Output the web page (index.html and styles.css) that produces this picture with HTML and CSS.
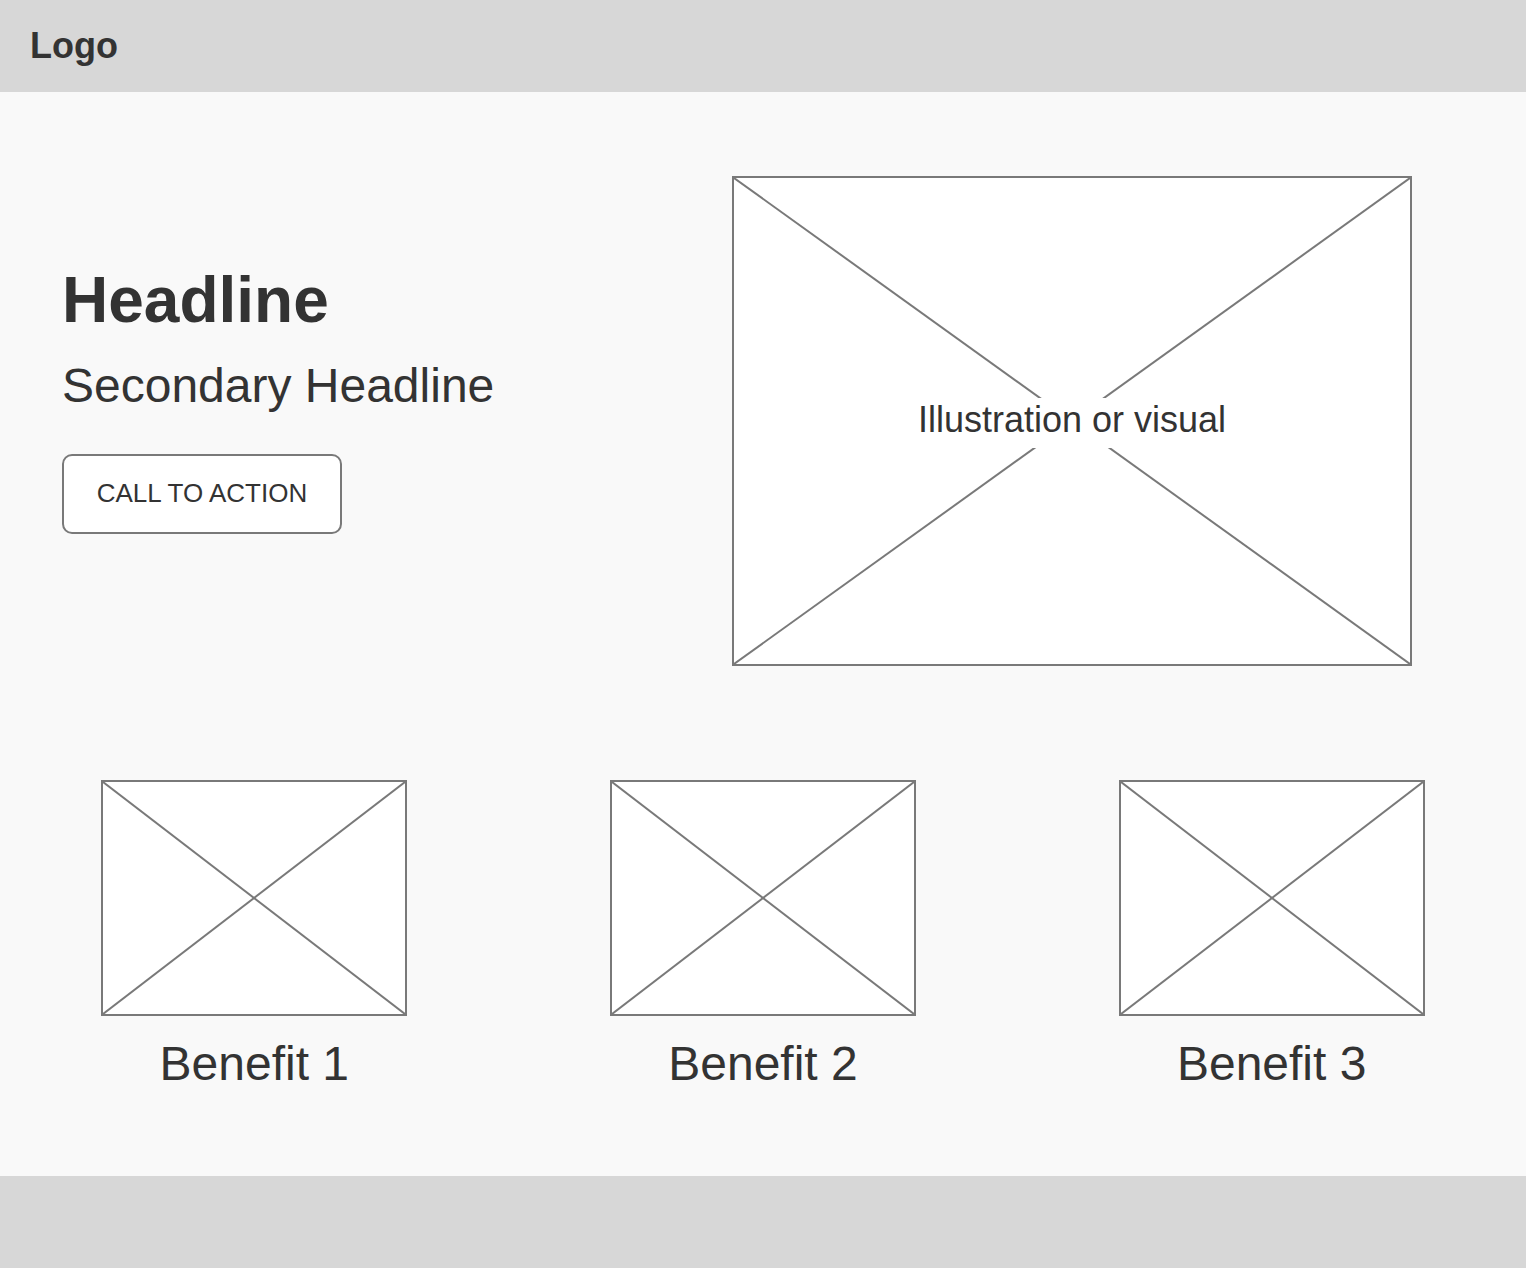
FILE: index.html
```html
<!DOCTYPE html>
<html lang="en">
<head>
  <meta charset="utf-8">
  <meta name="viewport" content="width=device-width, initial-scale=1">
  <title>Landing page</title>
  <link rel="stylesheet" href="styles.css">
</head>
<body>
  <header class="site-header">
    <div class="logo">Logo</div>
  </header>

  <main class="content">
    <section class="hero">
      <div class="hero-copy">
        <h1 class="headline">Headline</h1>
        <p class="subheadline">Secondary Headline</p>
        <button class="cta" type="button">CALL TO ACTION</button>
      </div>
      <div class="placeholder hero-visual">
        <svg class="cross" aria-hidden="true"><line x1="0" y1="0" x2="100%" y2="100%"/><line x1="0" y1="100%" x2="100%" y2="0"/></svg>
        <span class="placeholder-label">Illustration or visual</span>
      </div>
    </section>

    <section class="benefits">
      <article class="benefit">
        <div class="placeholder benefit-visual">
          <svg class="cross" aria-hidden="true"><line x1="0" y1="0" x2="100%" y2="100%"/><line x1="0" y1="100%" x2="100%" y2="0"/></svg>
        </div>
        <h2 class="benefit-title">Benefit 1</h2>
      </article>
      <article class="benefit">
        <div class="placeholder benefit-visual">
          <svg class="cross" aria-hidden="true"><line x1="0" y1="0" x2="100%" y2="100%"/><line x1="0" y1="100%" x2="100%" y2="0"/></svg>
        </div>
        <h2 class="benefit-title">Benefit 2</h2>
      </article>
      <article class="benefit">
        <div class="placeholder benefit-visual">
          <svg class="cross" aria-hidden="true"><line x1="0" y1="0" x2="100%" y2="100%"/><line x1="0" y1="100%" x2="100%" y2="0"/></svg>
        </div>
        <h2 class="benefit-title">Benefit 3</h2>
      </article>
    </section>
  </main>

  <footer class="site-footer"></footer>
</body>
</html>
```

FILE: styles.css
```css
*,
*::before,
*::after {
  box-sizing: border-box;
}

body {
  margin: 0;
  min-height: 100vh;
  display: flex;
  flex-direction: column;
  background: #f9f9f9;
  color: #333;
  font-family: Arial, "Liberation Sans", sans-serif;
}

.site-header,
.site-footer {
  min-height: 92px;
  background: #d7d7d7;
}

.site-header {
  display: flex;
  align-items: center;
  padding: 0 30px;
}

.logo {
  font-size: 36px;
  line-height: 44px;
  font-weight: bold;
}

.content {
  flex: 1;
}

.hero {
  display: flex;
  align-items: center;
  justify-content: space-between;
  gap: 40px;
  padding: 84px 114px 114px 62px;
}

.hero-copy {
  display: flex;
  flex-direction: column;
  align-items: flex-start;
  padding-bottom: 44px;
}

.headline {
  margin: 0 0 22px;
  font-size: 64px;
  line-height: 72px;
}

.subheadline {
  margin: 0 0 40px;
  font-size: 48px;
  line-height: 56px;
}

.cta {
  min-width: 280px;
  padding: 22px 32px 24px;
  border: 2px solid #797979;
  border-radius: 10px;
  background: #fff;
  color: inherit;
  font-family: inherit;
  font-size: 26px;
  line-height: 30px;
  cursor: pointer;
}

.placeholder {
  position: relative;
  border: 2px solid #797979;
  background: #fff;
}

.cross {
  position: absolute;
  inset: 0;
  width: 100%;
  height: 100%;
  stroke: #797979;
  stroke-width: 2;
}

.hero-visual {
  display: grid;
  place-items: center;
  flex: 0 1 680px;
  aspect-ratio: 68 / 49;
  padding-top: 4px;
}

.placeholder-label {
  position: relative;
  padding-bottom: 6px;
  background: #fff;
  font-size: 36px;
  line-height: 44px;
}

.benefits {
  display: grid;
  grid-template-columns: repeat(3, 1fr);
  padding-bottom: 84px;
}

.benefit {
  display: flex;
  flex-direction: column;
  align-items: center;
  gap: 20px;
}

.benefit-visual {
  width: 306px;
  max-width: 90%;
  aspect-ratio: 306 / 236;
}

.benefit-title {
  margin: 0;
  font-size: 48px;
  line-height: 56px;
  font-weight: normal;
}
```
